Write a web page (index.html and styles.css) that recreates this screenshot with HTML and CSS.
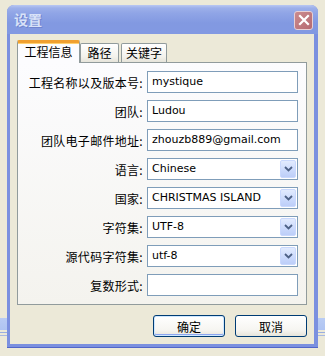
FILE: index.html
```html
<!DOCTYPE html>
<html lang="zh">
<head>
<meta charset="utf-8">
<title>设置</title>
<link rel="stylesheet" href="styles.css">
</head>
<body>
<div class="desktop">
  <div class="stripes"></div>
  <div class="window">
    <div class="titlebar">
      <span class="title">设置</span>
      <span class="close">
        <svg width="12" height="12" viewBox="0 0 12 12"><path d="M2 2 L10 10 M10 2 L2 10" stroke="#fff" stroke-width="2.2" stroke-linecap="square"/></svg>
      </span>
    </div>
    <div class="body">
      <div class="tabs">
        <div class="tab active">工程信息</div>
        <div class="tab t2">路径</div>
        <div class="tab t3">关键字</div>
      </div>
      <div class="panel">
        <div class="row"><label class="lbl">工程名称以及版本号:</label><div class="field">mystique</div></div>
        <div class="row"><label class="lbl">团队:</label><div class="field">Ludou</div></div>
        <div class="row"><label class="lbl">团队电子邮件地址:</label><div class="field">zhouzb889@gmail.com</div></div>
        <div class="row"><label class="lbl">语言:</label><div class="field select"><span class="val">Chinese</span><span class="drop"><svg width="9" height="6" viewBox="0 0 9 6"><path d="M1 1 L4.5 4.5 L8 1" stroke="#4D6185" stroke-width="1.8" fill="none"/></svg></span></div></div>
        <div class="row"><label class="lbl">国家:</label><div class="field select"><span class="val">CHRISTMAS ISLAND</span><span class="drop"><svg width="9" height="6" viewBox="0 0 9 6"><path d="M1 1 L4.5 4.5 L8 1" stroke="#4D6185" stroke-width="1.8" fill="none"/></svg></span></div></div>
        <div class="row"><label class="lbl">字符集:</label><div class="field select"><span class="val">UTF-8</span><span class="drop"><svg width="9" height="6" viewBox="0 0 9 6"><path d="M1 1 L4.5 4.5 L8 1" stroke="#4D6185" stroke-width="1.8" fill="none"/></svg></span></div></div>
        <div class="row"><label class="lbl">源代码字符集:</label><div class="field select"><span class="val">utf-8</span><span class="drop"><svg width="9" height="6" viewBox="0 0 9 6"><path d="M1 1 L4.5 4.5 L8 1" stroke="#4D6185" stroke-width="1.8" fill="none"/></svg></span></div></div>
        <div class="row"><label class="lbl">复数形式:</label><div class="field"></div></div>
      </div>
      <div class="buttons">
        <button class="btn default">确定</button>
        <button class="btn">取消</button>
      </div>
    </div>
  </div>
</div>
</body>
</html>
```
FILE: styles.css
```css
html, body {
  margin: 0;
  padding: 0;
}
body {
  width: 325px;
  height: 356px;
  overflow: hidden;
  background: #ECE9D8;
  font-family: "DejaVu Sans", "Noto Sans CJK SC", sans-serif;
  font-size: 11px;
  color: #000;
}
.desktop {
  position: relative;
  width: 325px;
  height: 356px;
  padding: 5px 0 0 7px;
  box-sizing: border-box;
}
.stripes {
  position: absolute;
  left: 0;
  top: 318px;
  width: 325px;
  height: 20px;
  background: linear-gradient(#B9CCF4 0, #AFC4F2 12px, #ECE9D8 12px, #ECE9D8 14px, #9AAEE0 14px, #9AAEE0 15px, #ECE9D8 15px, #ECE9D8 17px, #A8B8E2 17px, #A8B8E2 18px, #ECE9D8 18px);
}
.window {
  position: relative;
  width: 311px;
  height: 343px;
  box-sizing: border-box;
  background: #7B90DF;
  border-radius: 7px 7px 0 0;
  display: flex;
  flex-direction: column;
  padding: 0 4px 4px 3px;
  box-shadow: inset 0 -1px 0 #5166C9;
}
.titlebar {
  height: 29px;
  margin: 0 -4px 0 -3px;
  border-radius: 7px 7px 0 0;
  background: linear-gradient(#BAC8F2 0, #9DB0EA 3px, #90A5E6 8px, #8299E1 18px, #8299E2 29px);
  display: flex;
  align-items: center;
  justify-content: space-between;
  padding: 0 5px 0 7px;
  flex: none;
}
.title {
  font-family: "Noto Sans CJK SC", sans-serif;
  font-weight: bold;
  font-size: 14px;
  color: #D8E2F8;
  text-shadow: 1px 1px 0 #7083CE;
  margin-top: -1px;
}
.close {
  width: 19px;
  height: 19px;
  box-sizing: border-box;
  border: 1px solid #E8D0D4;
  border-radius: 3px;
  background: linear-gradient(135deg, #CB8B8E, #B66A71);
  display: flex;
  align-items: center;
  justify-content: center;
  margin-top: 1px;
}
.body {
  flex: 1;
  background: #ECE9D8;
  padding: 6px 7px 0 7px;
  display: flex;
  flex-direction: column;
}
.tabs {
  display: flex;
  align-items: flex-end;
  height: 22px;
  position: relative;
  z-index: 1;
}
.tab {
  font-family: "Noto Sans CJK SC", sans-serif;
  font-size: 12px;
  height: 19px;
  line-height: 18px;
  box-sizing: border-box;
  border: 1px solid #919B9C;
  border-bottom: none;
  border-radius: 2px 2px 0 0;
  background: linear-gradient(#FFFFFF, #F3F2EC 70%, #E6E4DA);
  text-align: center;
  flex: none;
}
.tab.active {
  width: 63px;
  height: 23px;
  margin-bottom: -1px;
  background: #FCFCFE;
  border-top: 3px solid #F0A030;
  box-shadow: inset 0 1px 0 #FFD070;
  line-height: 18px;
}
.tab.t2 {
  width: 39px;
}
.tab.t3 {
  width: 46px;
  margin-left: 2px;
}
.panel {
  height: 243px;
  box-sizing: border-box;
  border: 1px solid #919B9C;
  background: linear-gradient(#FCFCFE, #F4F3EE);
  padding: 8px 8px 0 0;
  display: flex;
  flex-direction: column;
  gap: 7px;
}
.row {
  display: flex;
  align-items: center;
  height: 22px;
}
.lbl {
  font-family: "Noto Sans CJK SC", sans-serif;
  font-size: 12px;
  width: 125px;
  text-align: right;
  padding-right: 4px;
  flex: none;
  white-space: nowrap;
  letter-spacing: 0.3px;
}
.field {
  width: 151px;
  height: 22px;
  box-sizing: border-box;
  border: 1px solid #7F9DB9;
  background: #fff;
  padding: 0 0 0 4px;
  line-height: 20px;
  display: flex;
  align-items: center;
  justify-content: space-between;
}
.select {
  padding-right: 1px;
}
.drop {
  width: 16px;
  height: 18px;
  box-sizing: border-box;
  border: 1px solid #C9D8FD;
  border-radius: 2px;
  background: linear-gradient(#E2EBFE, #CAD9FC 60%, #BDCEF8);
  display: flex;
  align-items: center;
  justify-content: center;
}
.buttons {
  display: flex;
  justify-content: flex-end;
  gap: 10px;
  margin-top: 10px;
}
.btn {
  width: 72px;
  height: 22px;
  box-sizing: border-box;
  border: 1px solid #003C74;
  border-radius: 3px;
  background: linear-gradient(#FFFFFF, #F6F5F1 70%, #E6E4DA);
  font-family: "Noto Sans CJK SC", sans-serif;
  font-size: 12px;
  color: #000;
  padding: 0;
}
.btn.default {
  box-shadow: inset 0 0 0 1px #CEE7FF, inset 0 -1px 0 1px #8DA6F0;
}
```
